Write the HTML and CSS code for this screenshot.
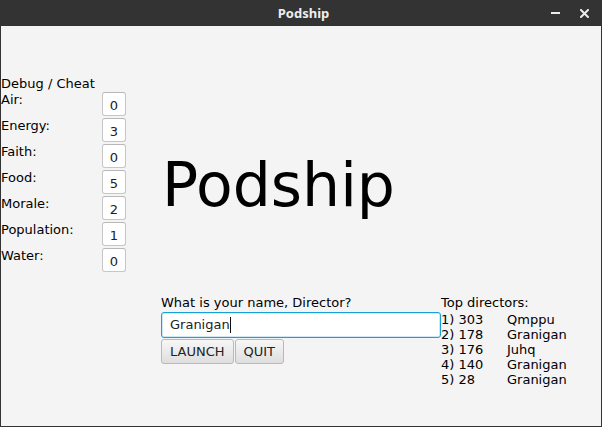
FILE: index.html
```html
<!DOCTYPE html>
<html>
<head>
<meta charset="utf-8">
<title>Podship</title>
<link rel="stylesheet" href="styles.css">
</head>
<body>
<div class="window">
  <div class="titlebar">
    <span></span>
    <span class="title">Podship</span>
    <span class="controls">
      <svg class="ctl" width="9" height="8" viewBox="0 0 9 8"><rect x="0" y="3" width="9" height="2" fill="#ececec"/></svg>
      <svg class="ctl" width="9" height="9" viewBox="0 0 9 9"><path d="M1 1 L8 8 M8 1 L1 8" stroke="#ececec" stroke-width="2" stroke-linecap="square"/></svg>
    </span>
  </div>
  <div class="content">
    <div class="debug">
      <div class="debug-head">Debug / Cheat</div>
      <div class="debug-grid">
        <span class="lbl">Air:</span><span class="box">0</span>
        <span class="lbl">Energy:</span><span class="box">3</span>
        <span class="lbl">Faith:</span><span class="box">0</span>
        <span class="lbl">Food:</span><span class="box">5</span>
        <span class="lbl">Morale:</span><span class="box">2</span>
        <span class="lbl">Population:</span><span class="box">1</span>
        <span class="lbl">Water:</span><span class="box">0</span>
      </div>
    </div>
    <div class="main">
      <div class="big-title">Podship</div>
      <div class="bottom">
        <div class="form">
          <div class="prompt">What is your name, Director?</div>
          <div class="field"><span>Granigan</span><span class="caret"></span></div>
          <div class="buttons">
            <button class="btn">LAUNCH</button>
            <button class="btn">QUIT</button>
          </div>
        </div>
        <div class="scores">
          <div class="scores-head">Top directors:</div>
          <div class="score-list">
            <span>1) 303</span><span>Qmppu</span>
            <span>2) 178</span><span>Granigan</span>
            <span>3) 176</span><span>Juhq</span>
            <span>4) 140</span><span>Granigan</span>
            <span>5) 28</span><span>Granigan</span>
          </div>
        </div>
      </div>
    </div>
  </div>
</div>
</body>
</html>
```
FILE: styles.css
```css
html, body {
  margin: 0;
  padding: 0;
}
body {
  width: 602px;
  height: 427px;
  overflow: hidden;
  font-family: "DejaVu Sans", sans-serif;
  font-size: 13px;
  color: #111;
}
.window {
  width: 602px;
  height: 427px;
  box-sizing: border-box;
  background: #333333;
  display: flex;
  flex-direction: column;
}
.titlebar {
  height: 26px;
  flex: none;
  display: grid;
  grid-template-columns: 1fr auto 1fr;
  align-items: center;
}
.title {
  font-family: "Noto Sans", sans-serif;
  font-weight: bold;
  font-size: 13px;
  color: #eeeeee;
  line-height: 26px;
  padding-left: 5px;
}
.controls {
  justify-self: end;
  display: flex;
  align-items: center;
  gap: 20px;
  padding-right: 13px;
}
.ctl {
  display: block;
}
.content {
  flex: 1;
  margin: 0 1px 1px 1px;
  background: #f4f4f4;
  display: flex;
}
.debug {
  width: 160px;
  padding: 50px 0 0 0;
  flex: none;
}
.debug-head {
  line-height: 15px;
  color: #000;
}
.debug-grid {
  margin-top: 1px;
  display: grid;
  grid-template-columns: 101px 24px;
  grid-auto-rows: 24px;
  row-gap: 2px;
}
.lbl {
  padding-top: 0;
  line-height: 15px;
  color: #000;
}
.box {
  box-sizing: border-box;
  height: 24px;
  background: #ffffff;
  border: 1px solid #c6c6c6;
  border-top-color: #b8b8b8;
  border-radius: 3px;
  text-align: center;
  line-height: 15px;
  padding-top: 5px;
  color: #222;
}
.main {
  flex: 1;
  display: flex;
  flex-direction: column;
}
.big-title {
  margin-top: 124px;
  margin-left: 1px;
  font-size: 60px;
  line-height: 70px;
  color: #000;
}
.bottom {
  margin-top: 75px;
  display: flex;
}
.form {
  width: 280px;
  flex: none;
}
.prompt {
  line-height: 15px;
  color: #000;
}
.field {
  margin-top: 2px;
  box-sizing: border-box;
  height: 26px;
  background: #ffffff;
  border: 1px solid #1a9fd6;
  border-radius: 3px;
  box-shadow: inset 0 0 0 1px #cde9f5;
  padding-left: 8px;
  line-height: 24px;
  display: flex;
  align-items: center;
  color: #222;
}
.caret {
  width: 1px;
  height: 16px;
  background: #111;
}
.buttons {
  margin-top: 1px;
  display: flex;
  gap: 1px;
}
.btn {
  font-family: "DejaVu Sans", sans-serif;
  font-size: 13px;
  height: 25px;
  padding: 0 8px;
  margin: 0;
  border: 1px solid #b9b9b9;
  border-radius: 3px;
  background: linear-gradient(#f7f7f7, #dedede);
  color: #222;
  line-height: 23px;
}
.scores {
  padding-left: 0;
}
.scores-head {
  line-height: 15px;
  color: #000;
}
.score-list {
  margin-top: 2px;
  display: grid;
  grid-template-columns: 66px auto;
  grid-auto-rows: 15px;
  line-height: 15px;
  color: #000;
}
```
